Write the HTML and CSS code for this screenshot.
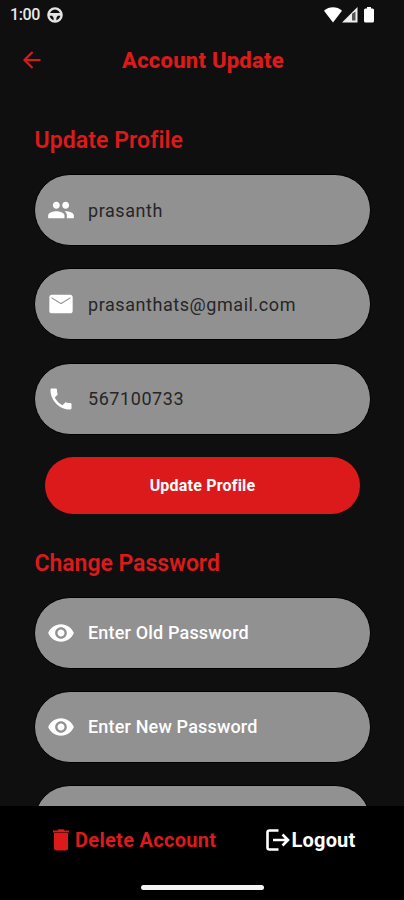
FILE: index.html
```html
<!DOCTYPE html>
<html lang="en">
<head>
<meta charset="utf-8">
<title>Account Update</title>
<link rel="stylesheet" href="styles.css">
</head>
<body>
<div class="screen">
  <div class="status">
    <span class="time">1:00</span>
    <svg class="wheel" viewBox="0 0 16 16"><circle cx="8" cy="8" r="6.6" fill="none" stroke="#e4e4e4" stroke-width="2.4"/><path d="M2 6h12v2.800h-3.200l-1.400 2V14H6.600v-3.200l-1.400-2H2z" fill="#e4e4e4"/></svg>
    <span class="grow"></span>
    <svg class="wifi" viewBox="0 0 18 16"><path d="M0 3.700C5-.9 13-.9 18 3.700L9 15.500z" fill="#fff"/></svg>
    <svg class="signal" viewBox="0 0 16 16"><path d="M0 15.500L15.500 0v15.500z" fill="#eee"/><path d="M10 6.800l3.500-2.300v9H10z" fill="#555"/></svg>
    <svg class="battery" viewBox="0 0 10 16"><path d="M3 0h4v1.500h1.500Q10 1.500 10 3v11q0 1.500-1.500 1.500h-7Q0 15.500 0 14V3q0-1.500 1.500-1.500H3z" fill="#fff"/></svg>
  </div>
  <header class="bar">
    <svg class="back" viewBox="0 0 18 18"><path d="M17.500 9H1.500M9.500 1L1.500 9l8 8" fill="none" stroke="currentColor" stroke-width="2.200"/></svg>
    <h1 class="title">Account Update</h1>
  </header>
  <main class="content">
    <h2 class="section profile">Update Profile</h2>
    <div class="fields">
      <div class="field">
        <svg class="icon" viewBox="0 0 24 24"><path d="M16 11c1.660 0 2.990-1.340 2.990-3S17.660 5 16 5s-3 1.340-3 3 1.340 3 3 3zm-8 0c1.660 0 2.990-1.340 2.990-3S9.660 5 8 5 5 6.340 5 8s1.340 3 3 3zm0 2c-2.330 0-7 1.170-7 3.500V19h14v-2.500C15 14.170 10.330 13 8 13zm8 0c-.29 0-.62.02-.97.05 1.160.84 1.970 1.970 1.970 3.450V19h6v-2.500c0-2.330-4.670-3.500-7-3.500z"/></svg>
        <span class="value name">prasanth</span>
      </div>
      <div class="field">
        <svg class="icon" viewBox="0 0 24 24"><path d="M20 4H4c-1.100 0-1.990.9-1.990 2L2 18c0 1.100.9 2 2 2h16c1.100 0 2-.9 2-2V6c0-1.100-.9-2-2-2zm0 3.300l-8 5-8-5V6.200l8 5 8-5v1.100z"/></svg>
        <span class="value email">prasanthats@gmail.com</span>
      </div>
      <div class="field">
        <svg class="icon" viewBox="0 0 24 24"><path d="M6.620 10.790c1.440 2.830 3.760 5.140 6.590 6.590l2.200-2.200c.27-.27.67-.36 1.020-.24 1.120.37 2.330.57 3.570.57.55 0 1 .45 1 1V20c0 .55-.45 1-1 1-9.390 0-17-7.610-17-17 0-.55.45-1 1-1h3.500c.55 0 1 .45 1 1 0 1.250.2 2.450.57 3.570.11.35.03.74-.25 1.020l-2.200 2.200z"/></svg>
        <span class="value phone">567100733</span>
      </div>
    </div>
    <button class="submit">Update Profile</button>
    <h2 class="section password">Change Password</h2>
    <div class="fields">
      <div class="field">
        <svg class="icon" viewBox="0 0 24 24"><path d="M12 4.500C7 4.500 2.730 7.610 1 12c1.730 4.390 6 7.500 11 7.500s9.270-3.110 11-7.500c-1.730-4.390-6-7.500-11-7.500zM12 17c-2.760 0-5-2.240-5-5s2.240-5 5-5 5 2.240 5 5-2.240 5-5 5zm0-8c-1.660 0-3 1.340-3 3s1.340 3 3 3 3-1.340 3-3-1.340-3-3-3z"/></svg>
        <span class="hint old">Enter Old Password</span>
      </div>
      <div class="field">
        <svg class="icon" viewBox="0 0 24 24"><path d="M12 4.500C7 4.500 2.730 7.610 1 12c1.730 4.390 6 7.500 11 7.500s9.270-3.110 11-7.500c-1.730-4.390-6-7.500-11-7.500zM12 17c-2.760 0-5-2.240-5-5s2.240-5 5-5 5 2.240 5 5-2.240 5-5 5zm0-8c-1.660 0-3 1.340-3 3s1.340 3 3 3 3-1.340 3-3-1.340-3-3-3z"/></svg>
        <span class="hint new">Enter New Password</span>
      </div>
      <div class="field"></div>
    </div>
  </main>
  <footer class="footer">
    <div class="actions">
      <div class="action delete">
        <svg class="trash" viewBox="0 0 16 22"><path d="M0 1.500h4.500L5.500.3h5l1 1.200H16v2H0zM1 4h14V19q0 2.500-2.500 2.500h-9Q1 21.500 1 19z" fill="currentColor"/></svg>
        <span class="delete-label">Delete Account</span>
      </div>
      <div class="action logout">
        <svg class="exit" viewBox="0 0 24 22"><path d="M12.500 1.500H3.500q-2 0-2 2v15q0 2 2 2h9M7 11h14.500M16.500 5.500L22 11l-5.500 5.500" fill="none" stroke="currentColor" stroke-width="2.600"/></svg>
        <span class="logout-label">Logout</span>
      </div>
    </div>
    <div class="handle"></div>
  </footer>
</div>
</body>
</html>
```
FILE: styles.css
```css
* { box-sizing: border-box; }
body { margin: 0; background: #0f0f0f; font-family: Roboto, sans-serif; }
.screen { display: flex; flex-direction: column; width: 404px; height: 900px; overflow: hidden; background: #0f0f0f; }
.status { display: flex; flex: none; align-items: center; height: 29px; padding: 0 30px 0 10px; color: #e8e8e8; }
.time { font-size: 16px; font-weight: 500; width: 37px; line-height: 29px; letter-spacing: -0.4px; white-space: nowrap; }
.wheel { width: 16px; height: 16px; }
.grow { flex: 1; }
.wifi { width: 18px; height: 16px; }
.signal { width: 16px; height: 16px; }
.battery { width: 10px; height: 16px; margin-left: 6px; }
.bar { display: flex; flex: none; align-items: center; height: 62px; padding-left: 23px; color: #dc1a1b; }
.back { width: 18px; height: 18px; margin-right: 81px; }
.title { margin: 0; padding-top: 1px; font-size: 22px; line-height: 28px; font-weight: 800; letter-spacing: 0.25px; white-space: nowrap; }
.content { flex: 1; min-height: 0; overflow: hidden; padding: 36px 33.5px 0 34px; }
.section { margin: 0; padding-left: 0.500px; font-size: 23px; line-height: 28px; font-weight: 600; color: #dc1a1b; white-space: nowrap; }
.profile { letter-spacing: 0.08px; }
.fields { display: flex; flex-direction: column; gap: 22.300px; margin-top: 19px; }
.field { display: flex; flex: none; align-items: center; height: 72px; padding-left: 12px; border: 1px solid #000; border-radius: 36px; background: #919191; }
.icon { width: 28px; height: 28px; margin-right: 13px; fill: #fff; }
.value { padding-top: 1px; font-size: 18px; line-height: 24px; color: #262626; letter-spacing: 0.56px; white-space: nowrap; }
.hint { padding-top: 1px; font-size: 18px; line-height: 24px; font-weight: 500; letter-spacing: 0.17px; color: #fff; white-space: nowrap; }
.submit { display: block; width: 315px; height: 57px; margin: 22px 0 0 11px; padding: 2px 0 0; border: 0; border-radius: 28.500px; background: #dc1a1b; color: #fff; font: 700 16px/24px Roboto, sans-serif; letter-spacing: 0.2px; }
.password { margin-top: 36px; letter-spacing: -0.04px; }
.footer { flex: none; height: 94px; background: #000; display: flex; flex-direction: column; align-items: center; }
.actions { display: flex; align-self: stretch; align-items: center; height: 67px; padding-left: 53px; font-size: 20px; font-weight: 700; white-space: nowrap; }
.action { display: flex; align-items: center; }
.delete { width: 213px; color: #dc1a1b; }
.delete-label { letter-spacing: 0.3px; }
.logout { color: #fff; }
.logout-label { letter-spacing: 0.2px; }
.trash { width: 16px; height: 22px; margin-right: 6px; }
.exit { width: 24px; height: 22px; margin-right: 1.500px; }
.handle { width: 123px; height: 5px; margin-top: 11.500px; border-radius: 3px; background: #f4f4f4; }
```
